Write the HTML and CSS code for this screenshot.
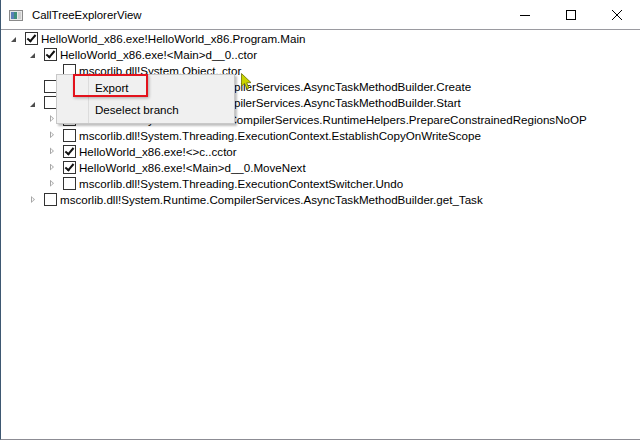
FILE: index.html
```html
<!DOCTYPE html>
<html lang="en">
<head>
  <meta charset="UTF-8" />
  <title>CallTreeExplorerView</title>
  <link rel="stylesheet" href="styles.css">
</head>
<body>
  <div class="window">
    <div class="titlebar">
      <svg class="app-icon" width="14" height="11" viewBox="0 0 14 11">
        <rect x="0.5" y="0.5" width="13" height="10" fill="#e8e8e8" stroke="#8a8a8a" />
        <rect x="2" y="2" width="6" height="7" fill="#3f8f7a" />
        <rect x="2" y="2" width="3" height="7" fill="#5b7fb8" />
        <rect x="9" y="2" width="3" height="7" fill="#cfcfcf" />
      </svg>
      <span class="title">CallTreeExplorerView</span>
      <div class="controls">
        <span class="ctl"><svg width="10" height="10" viewBox="0 0 10 10"><line x1="0" y1="5.5" x2="10" y2="5.5" stroke="#000" /></svg></span>
        <span class="ctl"><svg width="10" height="10" viewBox="0 0 10 10"><rect x="0.5" y="0.5" width="9" height="9" fill="none" stroke="#000" /></svg></span>
        <span class="ctl"><svg width="10" height="10" viewBox="0 0 10 10"><path d="M0 0 L10 10 M10 0 L0 10" stroke="#000" /></svg></span>
      </div>
    </div>

    <div class="tree">
      <div class="row" style="--lvl: 0"><span class="exp open"></span><span class="cb checked"></span><span class="label">HelloWorld_x86.exe!HelloWorld_x86.Program.Main</span></div>
      <div class="row" style="--lvl: 1"><span class="exp open"></span><span class="cb checked"></span><span class="label">HelloWorld_x86.exe!&lt;Main&gt;d__0..ctor</span></div>
      <div class="row" style="--lvl: 2"><span class="exp"></span><span class="cb"></span><span class="label">mscorlib.dll!System.Object..ctor</span></div>
      <div class="row" style="--lvl: 1"><span class="exp"></span><span class="cb"></span><span class="label">mscorlib.dll!System.Runtime.CompilerServices.AsyncTaskMethodBuilder.Create</span></div>
      <div class="row" style="--lvl: 1"><span class="exp open"></span><span class="cb"></span><span class="label">mscorlib.dll!System.Runtime.CompilerServices.AsyncTaskMethodBuilder.Start</span></div>
      <div class="row" style="--lvl: 2"><span class="exp closed"></span><span class="cb"></span><span class="label">mscorlib.dll!System.Runtime.CompilerServices.RuntimeHelpers.PrepareConstrainedRegionsNoOP</span></div>
      <div class="row" style="--lvl: 2"><span class="exp closed"></span><span class="cb"></span><span class="label">mscorlib.dll!System.Threading.ExecutionContext.EstablishCopyOnWriteScope</span></div>
      <div class="row" style="--lvl: 2"><span class="exp closed"></span><span class="cb checked"></span><span class="label">HelloWorld_x86.exe!&lt;&gt;c..cctor</span></div>
      <div class="row" style="--lvl: 2"><span class="exp closed"></span><span class="cb checked"></span><span class="label">HelloWorld_x86.exe!&lt;Main&gt;d__0.MoveNext</span></div>
      <div class="row" style="--lvl: 2"><span class="exp closed"></span><span class="cb"></span><span class="label">mscorlib.dll!System.Threading.ExecutionContextSwitcher.Undo</span></div>
      <div class="row" style="--lvl: 1"><span class="exp closed"></span><span class="cb"></span><span class="label">mscorlib.dll!System.Runtime.CompilerServices.AsyncTaskMethodBuilder.get_Task</span></div>
    </div>

    <div class="menu">
      <div class="menu-item">Export</div>
      <div class="menu-item">Deselect branch</div>
    </div>
    <div class="highlight"></div>
    <svg class="cursor" width="12" height="18" viewBox="0 0 12 18">
      <path d="M0.5 0.5 L0.5 13 L3.5 10.5 L6 16 L8 15 L5.7 9.8 L10 9.6 Z" fill="#c9d400" stroke="#6b7000" stroke-width="0.8" />
    </svg>
  </div>
</body>
</html>
```

FILE: styles.css
```css
html, body {
  margin: 0;
  background: #ffffff;
}
body {
  font-family: "Liberation Sans", Arial, sans-serif;
  font-size: 11.6px;
  color: #000;
}
.window {
  position: relative;
  width: 640px;
  height: 440px;
  box-sizing: border-box;
  border-left: 1px solid #3e5872;
  border-bottom: 1px solid #8c8c94;
  overflow: hidden;
}
.titlebar {
  height: 29px;
  display: flex;
  align-items: center;
  border-bottom: 1px solid #9a9aa0;
  box-sizing: content-box;
}
.app-icon {
  margin-left: 8px;
  margin-top: 1px;
}
.title {
  margin-left: 9px;
  font-size: 11.4px;
}
.controls {
  margin-left: auto;
  display: flex;
  align-items: center;
}
.ctl {
  width: 46px;
  height: 29px;
  display: flex;
  align-items: center;
  justify-content: center;
}
.ctl svg {
  display: block;
}
.tree {
  padding-left: 4px;
}
.row {
  height: 16.2px;
  display: flex;
  align-items: center;
  padding-left: calc(var(--lvl) * 19px);
  white-space: nowrap;
}
.exp {
  width: 18px;
  height: 16px;
  flex: none;
  position: relative;
}
.exp.open::after {
  content: "";
  position: absolute;
  left: 6px;
  top: 7px;
  width: 0;
  height: 0;
  border-left: 5px solid transparent;
  border-bottom: 5px solid #4d4d4d;
}
.exp.closed::after {
  content: "";
  position: absolute;
  left: 7px;
  top: 4px;
  width: 4px;
  height: 7px;
  background: #a6a6a6;
  clip-path: polygon(0 0, 100% 50%, 0 100%, 0 0, 1px 1.6px, 1px 5.4px, 2.8px 3.5px, 1px 1.6px);
}
.cb {
  width: 11px;
  height: 11px;
  border: 1px solid #333;
  background: #fff;
  margin-left: 2px;
  flex: none;
  position: relative;
}
.cb.checked::after {
  content: "";
  position: absolute;
  left: 3px;
  top: 0px;
  width: 3px;
  height: 7px;
  border-right: 2px solid #111;
  border-bottom: 2px solid #111;
  transform: rotate(40deg);
}
.label {
  margin-left: 3px;
}
.menu {
  position: absolute;
  left: 55px;
  top: 74px;
  width: 177px;
  padding: 2px 0;
  background: #f0f0f0;
  border: 1px solid #c8c8c8;
  box-shadow: 2px 2px 2px rgba(0, 0, 0, 0.25);
  background-image: linear-gradient(#dcdcdc, #dcdcdc);
  background-size: 1px 100%;
  background-position: 31px 0;
  background-repeat: no-repeat;
}
.menu-item {
  height: 22px;
  line-height: 22px;
  padding-left: 38px;
}
.highlight {
  position: absolute;
  left: 72px;
  top: 74px;
  width: 71px;
  height: 19px;
  border: 2px solid #e3121c;
  box-shadow: 1px 1px 3px rgba(0, 0, 0, 0.3);
}
.cursor {
  position: absolute;
  left: 240px;
  top: 73px;
}
```
